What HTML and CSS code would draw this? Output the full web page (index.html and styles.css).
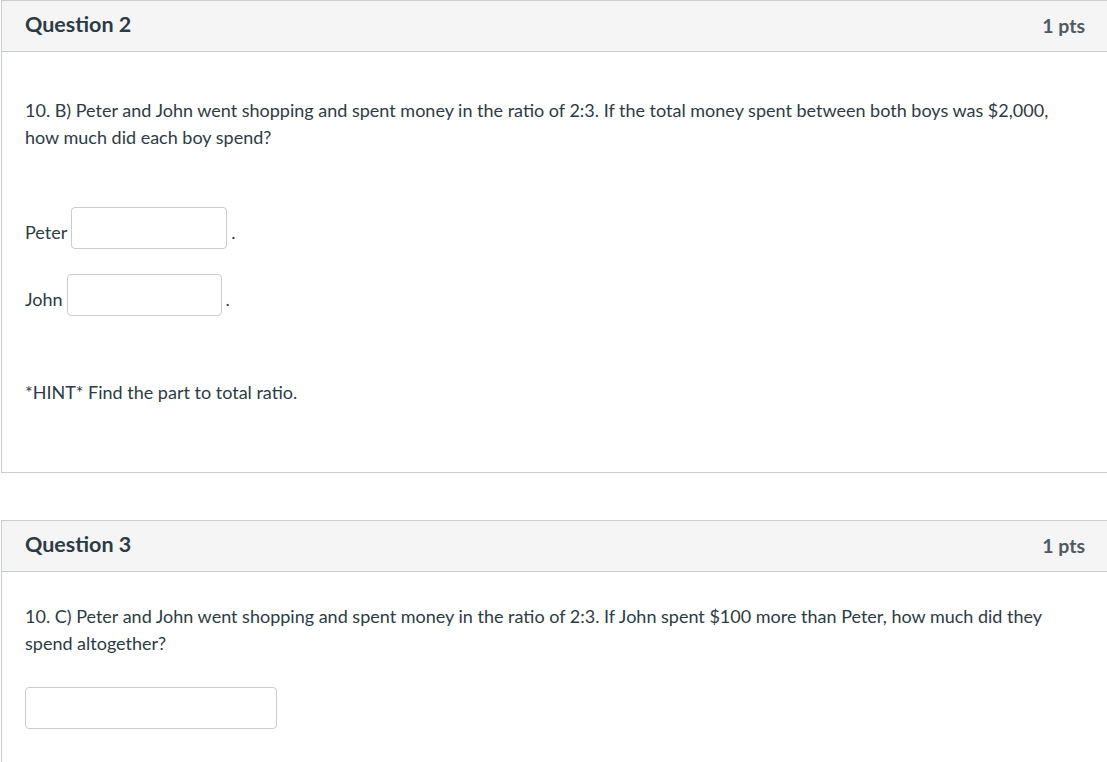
FILE: index.html
```html
<!DOCTYPE html>
<html>
<head>
<meta charset="utf-8">
<link rel="stylesheet" href="styles.css">
</head>
<body>
<div class="page">
  <div class="card card-q2">
    <div class="card-head">
      <span class="q-title">Question 2</span>
      <span class="q-pts">1 pts</span>
    </div>
    <div class="card-body body-q2">
      <p class="q-text">10. B) Peter and John went shopping and spent money in the ratio of 2:3. If the total money spent between both boys was $2,000, how much did each boy spend?</p>
      <div class="answers">
        <div class="ans-row">
          <span class="ans-label">Peter</span>
          <span class="ans-input w-peter"></span>
          <span class="ans-dot">.</span>
        </div>
        <div class="ans-row">
          <span class="ans-label">John</span>
          <span class="ans-input w-john"></span>
          <span class="ans-dot">.</span>
        </div>
      </div>
      <p class="q-text hint">*HINT* Find the part to total ratio.</p>
    </div>
  </div>
  <div class="card card-q3">
    <div class="card-head">
      <span class="q-title">Question 3</span>
      <span class="q-pts">1 pts</span>
    </div>
    <div class="card-body body-q3">
      <p class="q-text">10. C) Peter and John went shopping and spent money in the ratio of 2:3. If John spent $100 more than Peter, how much did they spend altogether?</p>
      <div class="ans-input w-wide"></div>
    </div>
  </div>
</div>
</body>
</html>
```

FILE: styles.css
```css
html, body {
  margin: 0;
  padding: 0;
  background: #ffffff;
  overflow: hidden;
}
body {
  font-family: Lato, "Open Sans", sans-serif;
  color: #2d3b45;
  width: 1107px;
  height: 762px;
}
.page {
  padding-left: 1px;
  width: 1110px;
}
.card {
  border: 1px solid #c7cdd1;
  box-sizing: border-box;
  width: 1108px;
}
.card-q3 {
  margin-top: 47px;
}
.card-head {
  height: 51px;
  box-sizing: border-box;
  background: #f5f5f5;
  border-bottom: 1px solid #c7cdd1;
  display: flex;
  align-items: center;
  justify-content: space-between;
  padding: 0 23px 0 23px;
}
.q-title {
  font-size: 21.5px;
  font-weight: 700;
  color: #2d3b45;
  margin-top: -4px;
}
.q-pts {
  font-size: 19.5px;
  font-weight: 700;
  color: #4f5a63;
  margin-top: -1px;
}
.card-body {
  padding: 0 23px;
}
.q-text {
  margin: 0;
  font-size: 18px;
  line-height: 27px;
}
.body-q2 {
  padding-top: 45px;
  padding-bottom: 66px;
}
.answers {
  margin-top: 56px;
  display: flex;
  flex-direction: column;
  gap: 25px;
}
.ans-row {
  display: flex;
  align-items: flex-end;
  font-size: 18px;
  line-height: 27px;
}
.ans-label {
  padding-bottom: 3px;
  margin-right: 4px;
}
.ans-dot {
  padding-bottom: 3px;
  margin-left: 4px;
}
.ans-input {
  display: block;
  height: 42px;
  box-sizing: border-box;
  border: 1px solid #c7cdd1;
  border-radius: 4px;
  background: #fff;
}
.w-peter { width: 156px; }
.w-john { width: 155px; }
.w-wide { width: 252px; margin-top: 30px; }
.hint {
  margin-top: 63px;
}
.body-q3 {
  padding-top: 31px;
  padding-bottom: 40px;
}
```
